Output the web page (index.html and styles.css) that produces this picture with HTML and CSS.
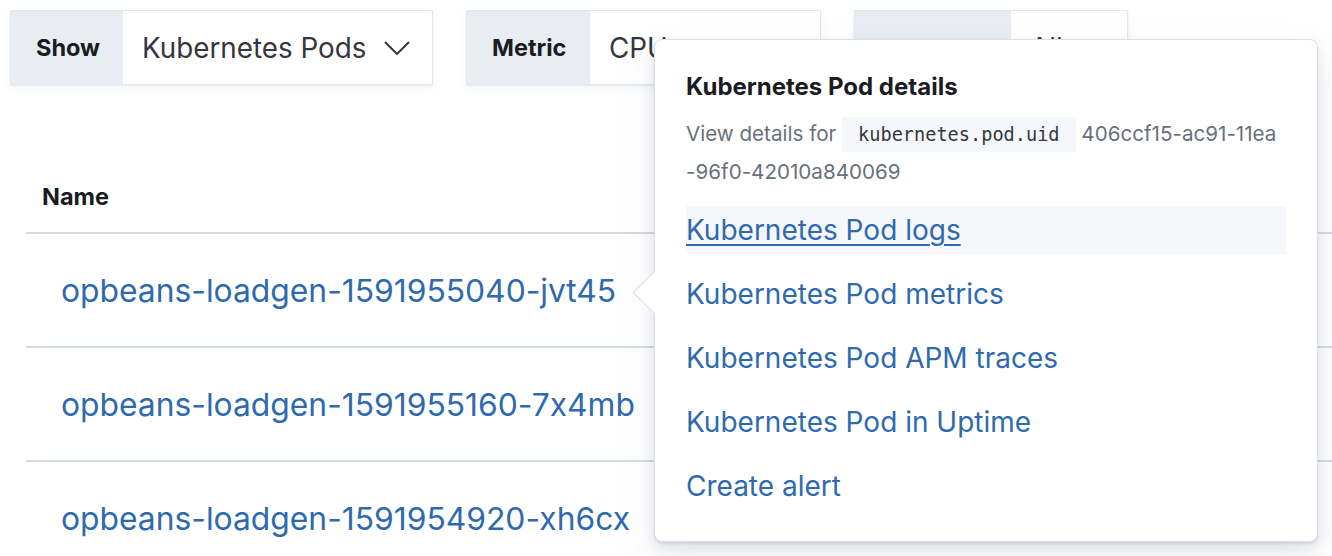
FILE: index.html
```html
<!DOCTYPE html>
<html>
<head>
<meta charset="utf-8">
<link rel="stylesheet" href="styles.css">
</head>
<body>
<div class="page">
  <div class="toolbar">
    <div class="control c1">
      <div class="prepend">Show</div>
      <div class="value">
        <span>Kubernetes Pods</span>
        <svg class="chev" width="26" height="14" viewBox="0 0 26 14"><polyline points="1,1 13,13 25,1" fill="none" stroke="#343741" stroke-width="2"/></svg>
      </div>
    </div>
    <div class="control c2">
      <div class="prepend">Metric</div>
      <div class="value"><span>CPU usage</span></div>
    </div>
    <div class="control c3">
      <div class="prepend p3">Group by</div>
      <div class="value v3"><span>All</span></div>
    </div>
  </div>

  <div class="table">
    <div class="thead">Name</div>
    <div class="row"><a class="rlink">opbeans-loadgen-1591955040-jvt45</a></div>
    <div class="row"><a class="rlink">opbeans-loadgen-1591955160-7x4mb</a></div>
    <div class="row"><a class="rlink">opbeans-loadgen-1591954920-xh6cx</a></div>
  </div>

  <div class="popover">
    <div class="arrow"></div>
    <div class="ptitle">Kubernetes Pod details</div>
    <div class="pdesc">View details for <code class="badge">kubernetes.pod.uid</code> 406ccf15-ac91-11ea -96f0-42010a840069</div>
    <ul class="plist">
      <li class="item hover"><a>Kubernetes Pod logs</a></li>
      <li class="item"><a>Kubernetes Pod metrics</a></li>
      <li class="item"><a>Kubernetes Pod APM traces</a></li>
      <li class="item"><a>Kubernetes Pod in Uptime</a></li>
      <li class="item"><a>Create alert</a></li>
    </ul>
  </div>
</div>
</body>
</html>
```

FILE: styles.css
```css
* { box-sizing: border-box; }
html, body { margin: 0; padding: 0; background: #fff; }
body {
  font-family: Inter, "Noto Sans", sans-serif;
  font-feature-settings: "calt" 0;
  color: #343741;
  width: 1332px;
  height: 556px;
  overflow: hidden;
}
.page { position: relative; width: 1332px; height: 556px; }

.toolbar {
  display: flex;
  gap: 33px;
  padding: 10px 0 0 10px;
}
.control {
  display: flex;
  height: 75px;
  border: 1px solid #e3e7ef;
  background: #fff;
  box-shadow: 0 3px 6px rgba(152, 162, 179, 0.12), 0 1px 2px rgba(152, 162, 179, 0.1);
}
.c1 { width: 423px; }
.c2 { width: 355px; }
.c3 { width: 274px; }
.prepend {
  background: #e9edf3;
  display: flex;
  align-items: center;
  padding: 0 25px;
  font-weight: 700;
  font-size: 23.5px;
  color: #1a1c21;
  white-space: nowrap;
}
.c1 .prepend { width: 112px; }
.c2 .prepend { width: 123px; }
.c3 .prepend { width: 156px; }
.value {
  flex: 1;
  display: flex;
  align-items: center;
  justify-content: space-between;
  padding: 0 22px 0 19px;
  font-size: 27.8px;
  color: #343741;
  white-space: nowrap;
  overflow: hidden;
}
.chev { display: block; flex: none; }

.table {
  margin: 76px 0 0 26px;
}
.thead {
  height: 73px;
  display: flex;
  align-items: center;
  padding: 0 0 0 16px;
  font-weight: 700;
  font-size: 23.5px;
  color: #1a1c21;
  border-bottom: 2px solid #d3dae6;
}
.row {
  height: 114px;
  display: flex;
  align-items: center;
  padding-left: 35px;
  border-bottom: 2px solid #d3dae6;
}
.rlink {
  font-size: 31.8px;
  color: #2f6aae;
}

.popover {
  position: absolute;
  left: 654px;
  top: 39px;
  width: 664px;
  height: 503px;
  background: #fff;
  border: 1px solid #d9dee8;
  border-radius: 8px;
  box-shadow: 0 2px 2px rgba(0,0,0,0.08), 0 6px 14px rgba(100,110,130,0.14), 0 18px 40px rgba(100,110,130,0.10);
  padding: 31px 31px 31px 31px;
}
.arrow {
  position: absolute;
  left: -16px;
  top: 237px;
  width: 31px;
  height: 31px;
  background: #fff;
  border-left: 1px solid #d9dee8;
  border-bottom: 1px solid #d9dee8;
  transform: rotate(45deg);
}
.ptitle {
  font-weight: 700;
  font-size: 24px;
  line-height: 32px;
  color: #1a1c21;
}
.pdesc {
  margin-top: 12px;
  font-size: 20.6px;
  line-height: 38px;
  color: #69707d;
}
.badge {
  display: inline-block;
  font-family: "DejaVu Sans Mono", "Liberation Mono", monospace;
  font-size: 18.6px;
  line-height: 35px;
  color: #343741;
  background: #f5f7fa;
  padding: 0 16px;
  margin: 0;
}
.plist {
  list-style: none;
  margin: 15px 0 0 0;
  padding: 0;
  display: flex;
  flex-direction: column;
  gap: 16px;
}
.item {
  height: 48px;
  display: flex;
  align-items: center;
  font-size: 28px;
}
.item a { color: #2f6aae; }
.item.hover { background: #f5f7fa; }
.item.hover a { text-decoration: underline; text-decoration-thickness: 2px; text-underline-offset: 4px; }
```
